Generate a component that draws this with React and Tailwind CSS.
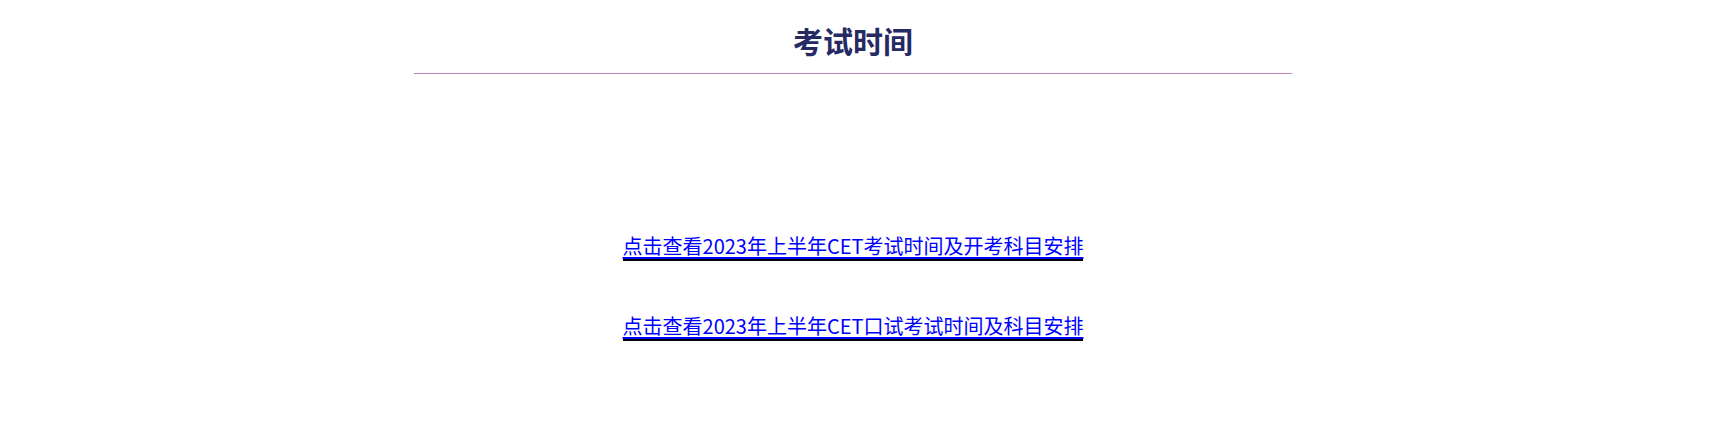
export default function App() {
  const links = [
    '点击查看2023年上半年CET考试时间及开考科目安排',
    '点击查看2023年上半年CET口试考试时间及科目安排',
  ];
  return (
    <div className="min-h-[432px] bg-white" style={{ fontFamily: '"Noto Sans CJK SC", "Noto Sans", sans-serif' }}>
      <div className="ml-[414px] w-[878px]">
        <h2 className="pt-[19px] pb-[12px] text-center text-[30px] font-bold leading-[42px] text-[#262a63]">考试时间</h2>
        <div className="h-px bg-[#c083c0]" />
        <div className="flex flex-col items-center gap-[52px] pt-[159px]">
          {links.map((t) => (
            <a key={t} href="#" className="border-b-2 border-black text-[20px] leading-[26px] text-[#0000ff] underline decoration-[#0000ff] underline-offset-[3px]">
              {t}
            </a>
          ))}
        </div>
      </div>
    </div>
  );
}
